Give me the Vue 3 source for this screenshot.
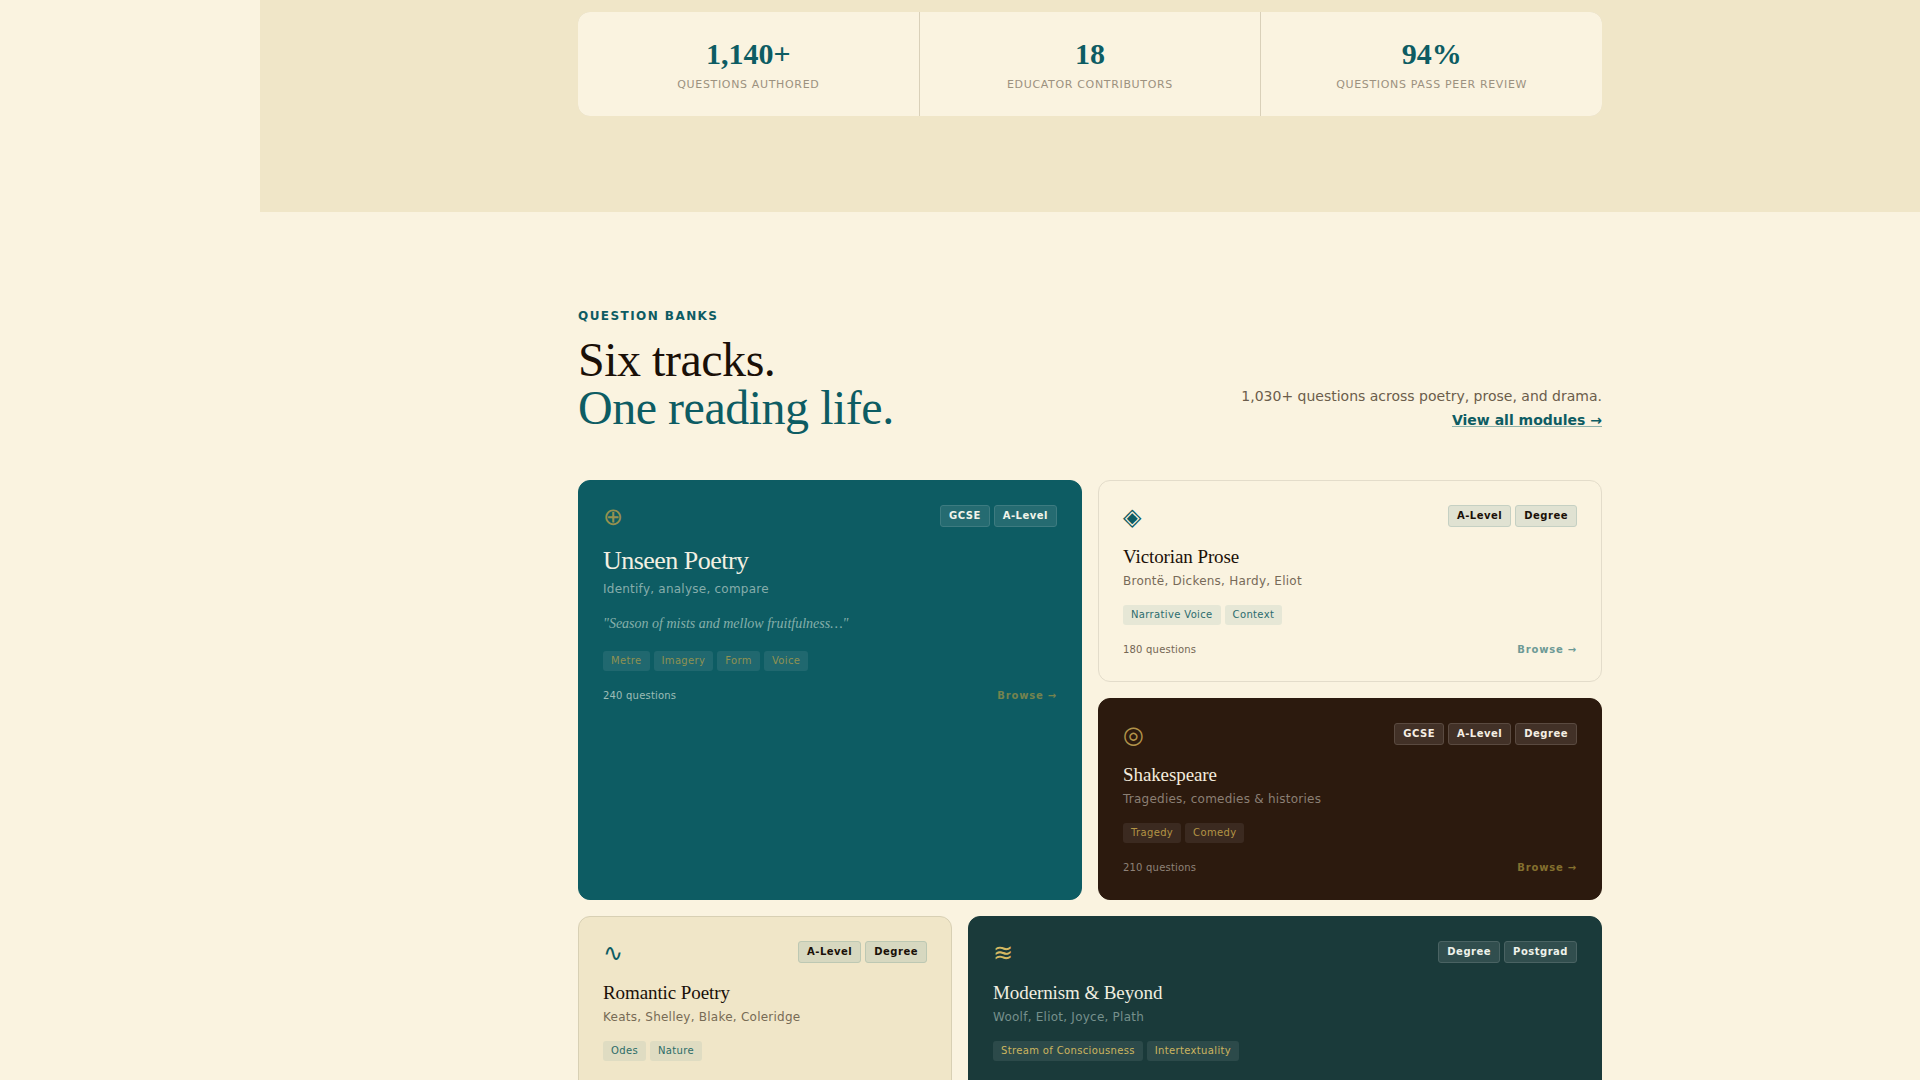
<script setup>
const stats = [
  { value: '1,140+', label: 'Questions authored' },
  { value: '18', label: 'Educator contributors' },
  { value: '94%', label: 'Questions pass peer review' },
]

const featured = [
  {
    theme: 'teal',
    icon: '⊕',
    levels: ['GCSE', 'A-Level'],
    title: 'Unseen Poetry',
    subtitle: 'Identify, analyse, compare',
    quote: '"Season of mists and mellow fruitfulness…"',
    topics: ['Metre', 'Imagery', 'Form', 'Voice'],
    count: 240,
  },
  {
    theme: 'cream',
    icon: '◈',
    levels: ['A-Level', 'Degree'],
    title: 'Victorian Prose',
    subtitle: 'Brontë, Dickens, Hardy, Eliot',
    topics: ['Narrative Voice', 'Context'],
    count: 180,
  },
  {
    theme: 'brown',
    icon: '◎',
    levels: ['GCSE', 'A-Level', 'Degree'],
    title: 'Shakespeare',
    subtitle: 'Tragedies, comedies & histories',
    topics: ['Tragedy', 'Comedy'],
    count: 210,
  },
]

const secondary = [
  {
    theme: 'sand',
    icon: '∿',
    levels: ['A-Level', 'Degree'],
    title: 'Romantic Poetry',
    subtitle: 'Keats, Shelley, Blake, Coleridge',
    topics: ['Odes', 'Nature'],
  },
  {
    theme: 'forest',
    icon: '≋',
    levels: ['Degree', 'Postgrad'],
    title: 'Modernism & Beyond',
    subtitle: 'Woolf, Eliot, Joyce, Plath',
    topics: ['Stream of Consciousness', 'Intertextuality'],
  },
]

const rows = [
  { name: 'featured', cards: featured },
  { name: 'secondary', cards: secondary },
]
</script>

<template>
  <div class="page">
    <aside class="rail"></aside>
    <main class="main">
      <section class="stats-band">
        <dl class="stats">
          <div v-for="s in stats" :key="s.label" class="stat">
            <dd class="stat-value">{{ s.value }}</dd>
            <dt class="stat-label">{{ s.label }}</dt>
          </div>
        </dl>
      </section>

      <section class="banks">
        <header class="banks-head">
          <div>
            <p class="eyebrow">Question banks</p>
            <h2 class="heading">Six tracks.<br /><span class="accent">One reading life.</span></h2>
          </div>
          <p class="summary">
            1,030+ questions across poetry, prose, and drama.<br />
            <a class="all-link" href="#modules">View all modules →</a>
          </p>
        </header>

        <div v-for="row in rows" :key="row.name" class="grid" :class="row.name">
          <article v-for="c in row.cards" :key="c.title" class="card" :class="c.theme">
            <div class="card-top">
              <span class="icon" aria-hidden="true">{{ c.icon }}</span>
              <div class="levels">
                <span v-for="l in c.levels" :key="l" class="level">{{ l }}</span>
              </div>
            </div>
            <h3 class="title">{{ c.title }}</h3>
            <p class="subtitle">{{ c.subtitle }}</p>
            <p v-if="c.quote" class="quote">{{ c.quote }}</p>
            <div class="topics">
              <span v-for="t in c.topics" :key="t" class="topic">{{ t }}</span>
            </div>
            <div v-if="c.count" class="card-foot">
              <span class="count">{{ c.count }} questions</span>
              <a class="browse" href="#browse">Browse →</a>
            </div>
          </article>
        </div>
      </section>
    </main>
  </div>
</template>

<style>
body {
  margin: 0;
  background: #faf3e0;
}
</style>

<style scoped>
.page {
  display: flex;
  height: 100vh;
  overflow: hidden;
  background: #faf3e0;
  color: #1a1008;
  font-family: "DejaVu Sans", sans-serif;
}
.rail {
  flex: 0 0 260px;
}
.main {
  flex: 1;
  min-width: 0;
}
p, h2, h3, dl, dd {
  margin: 0;
}

.stats-band {
  padding: 12px 48px 96px;
  background: #f0e6c8;
}
.stats {
  display: grid;
  grid-template-columns: repeat(3, 1fr);
  gap: 1px;
  max-width: 1024px;
  margin: 0 auto;
  border-radius: 12px;
  overflow: hidden;
  background: #d9d0b9;
}
.stat {
  display: flex;
  flex-direction: column;
  align-items: center;
  padding: 24px;
  background: #faf3e0;
}
.stat-value {
  margin-bottom: 6px;
  font: 700 30px/36px "Liberation Serif", serif;
  color: #0d5c63;
}
.stat-label {
  font-size: 11px;
  line-height: 14px;
  letter-spacing: 0.06em;
  text-transform: uppercase;
  color: #9c917f;
}

.banks {
  max-width: 1024px;
  margin: 0 auto;
  padding: 96px 48px;
}
.banks-head {
  display: flex;
  justify-content: space-between;
  align-items: flex-end;
  margin-bottom: 48px;
}
.eyebrow {
  margin-bottom: 12px;
  font-size: 12px;
  font-weight: 700;
  line-height: 16px;
  letter-spacing: 0.12em;
  text-transform: uppercase;
  color: #0d5c63;
}
.heading {
  font: 400 48px/48px "Liberation Serif", serif;
  letter-spacing: -0.01em;
}
.accent {
  color: #0d5c63;
}
.summary {
  font-size: 14px;
  line-height: 24px;
  text-align: right;
  color: #6b5d4b;
}
.all-link {
  font-weight: 700;
  color: #0d5c63;
  text-decoration: underline 1px #8fb3ab;
  text-underline-offset: 1px;
}

.grid {
  display: grid;
  gap: 16px;
  margin-bottom: 16px;
}
.featured {
  grid-template-columns: 1fr 1fr;
}
.featured .card:first-child {
  grid-row: span 2;
}
.secondary {
  grid-template-columns: 59fr 100fr;
}
.card {
  box-sizing: border-box;
  min-height: 202px;
  padding: 24px;
  border: 1px solid var(--edge);
  border-radius: 12px;
  background: var(--bg);
}
.card-top {
  display: flex;
  justify-content: space-between;
  align-items: flex-start;
  margin-bottom: 16px;
}
.icon {
  font-size: 24px;
  line-height: 24px;
  color: var(--icon);
}
.levels,
.topics {
  display: flex;
  gap: 4px;
}
.level {
  padding: 0 8px;
  border: 1px solid var(--level-edge);
  border-radius: 3px;
  background: var(--level-bg);
  font-size: 10px;
  font-weight: 700;
  line-height: 20px;
  letter-spacing: 0.05em;
  color: var(--level);
}
.title {
  margin-bottom: 4px;
  font: 400 19px/24px "Liberation Serif", serif;
  letter-spacing: -0.005em;
  color: var(--title);
}
.teal .title {
  font-size: 26px;
  line-height: 32px;
  letter-spacing: -0.02em;
}
.subtitle {
  margin-bottom: 15px;
  font-size: 12px;
  line-height: 17px;
  letter-spacing: 0.02em;
  color: var(--muted);
}
.quote {
  margin-bottom: 16px;
  font: italic 400 14px/22px "Liberation Serif", serif;
  color: var(--quote);
}
.topics {
  margin-bottom: 18px;
}
.topic {
  padding: 0 8px;
  border-radius: 3px;
  background: var(--topic-bg);
  font-size: 10px;
  line-height: 20px;
  letter-spacing: 0.035em;
  color: var(--topic);
}
.card-foot {
  display: flex;
  justify-content: space-between;
  font-size: 10px;
  line-height: 14px;
}
.count {
  letter-spacing: 0.02em;
  color: var(--count);
}
.browse {
  font-weight: 700;
  letter-spacing: 0.08em;
  text-decoration: none;
  color: var(--browse);
}

.teal {
  --bg: #0d5c63;
  --edge: #0d5c63;
  --icon: #95914f;
  --title: #f2f0e2;
  --muted: #86adab;
  --quote: #86b0ab;
  --level: #f2f4ea;
  --level-bg: #256b71;
  --level-edge: #3d7b80;
  --topic: #8f9152;
  --topic-bg: #20686f;
  --count: #9dbdb6;
  --browse: #75834e;
}
.cream {
  --bg: #faf3e0;
  --edge: #e3dcca;
  --icon: #0d5c63;
  --title: #1a1008;
  --muted: #776a58;
  --level: #1a1008;
  --level-bg: #e0e2d2;
  --level-edge: #c5d0c3;
  --topic: #2c6c6e;
  --topic-bg: #e6e7d6;
  --count: #746654;
  --browse: #6d9a96;
}
.brown {
  --bg: #2c1a0e;
  --edge: #2c1a0e;
  --icon: #b2934a;
  --title: #f3ebdd;
  --muted: #8b7f74;
  --level: #f5eee3;
  --level-bg: #423127;
  --level-edge: #5a4a40;
  --topic: #b39445;
  --topic-bg: #3b2a20;
  --count: #8e8278;
  --browse: #84702e;
}
.sand {
  --bg: #f0e6c8;
  --edge: #d8d0b4;
  --icon: #0d5c63;
  --title: #1a1008;
  --muted: #776b55;
  --level: #1a1008;
  --level-bg: #d7d8c0;
  --level-edge: #bdc8b3;
  --topic: #2c6c68;
  --topic-bg: #dfdcc2;
}
.forest {
  --bg: #1a3a3a;
  --edge: #1a3a3a;
  --icon: #d5b962;
  --title: #f0eee0;
  --muted: #76908c;
  --level: #eef2ea;
  --level-bg: #314e4e;
  --level-edge: #4a6363;
  --topic: #cdb55f;
  --topic-bg: #2c4a4a;
}
</style>
